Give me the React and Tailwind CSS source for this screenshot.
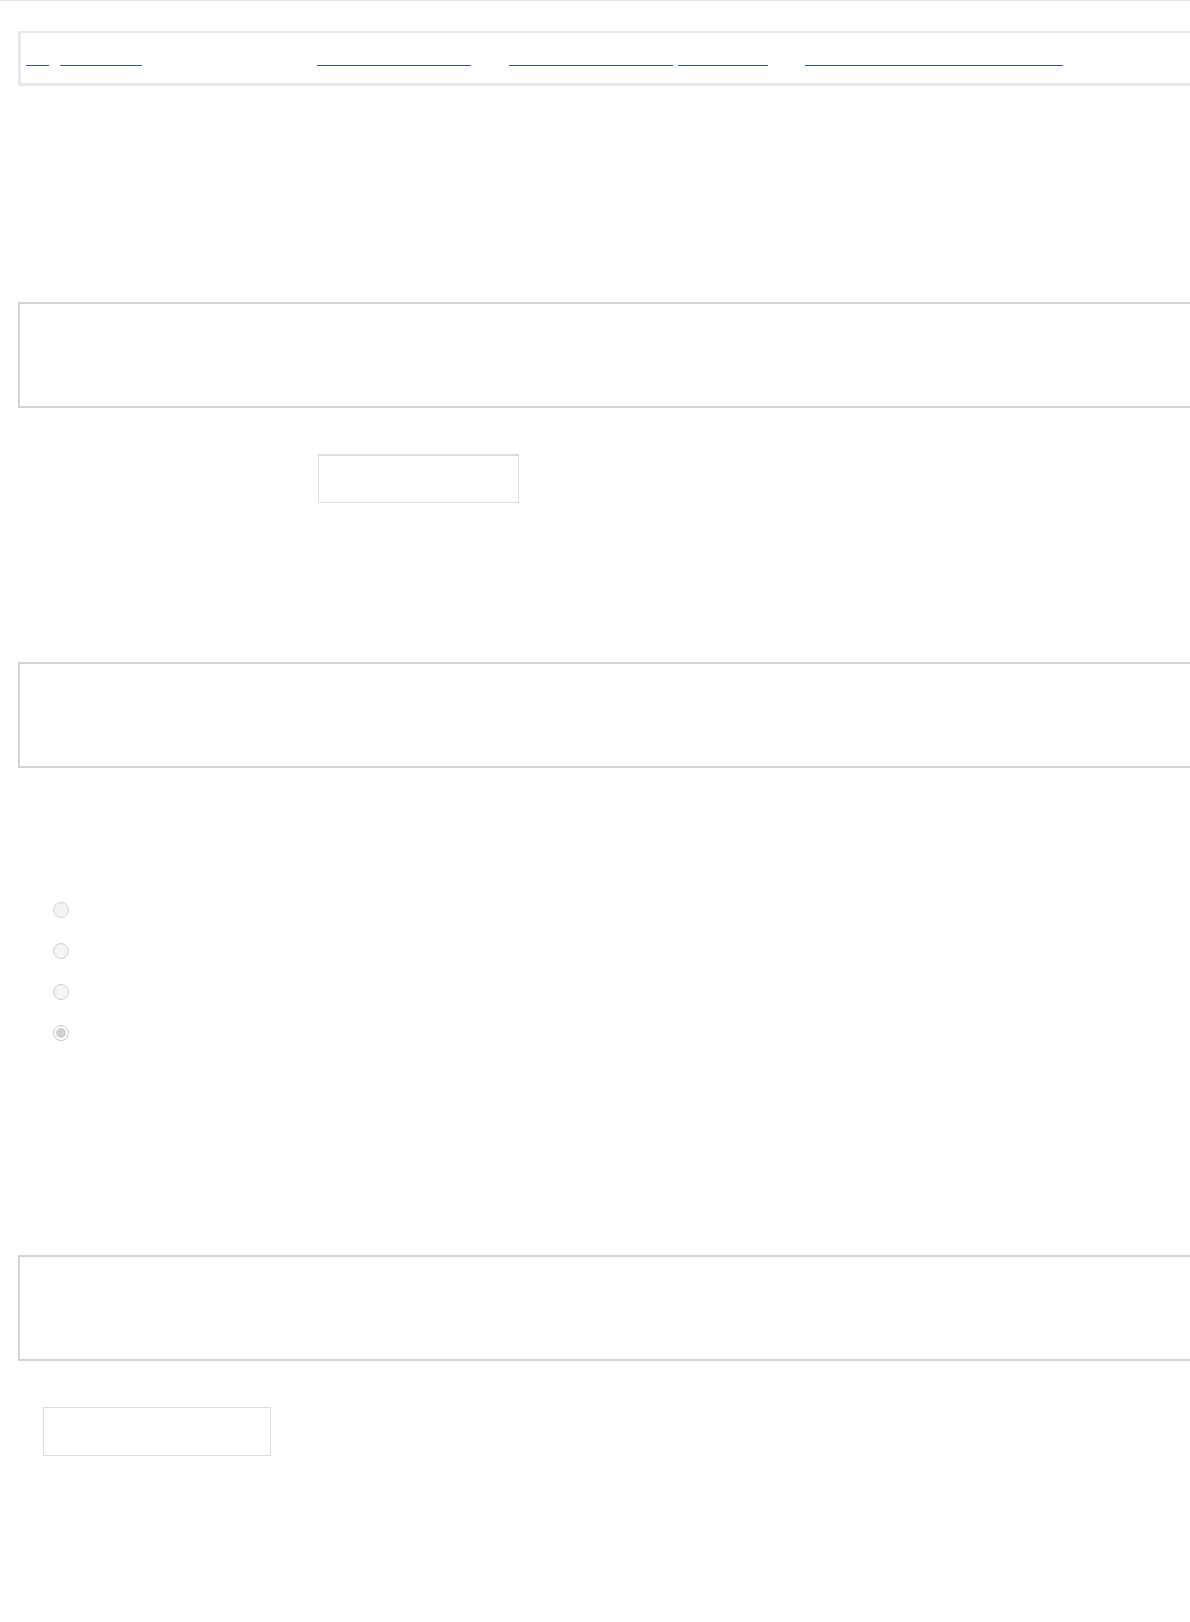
import React from "react";

function Radio({ checked }) {
  return (
    <div
      className={
        "w-[16px] h-[16px] rounded-full border flex items-center justify-center " +
        (checked ? "border-[#c6c6c6] bg-white" : "border-[#cfcfcf] bg-[#f4f4f4]")
      }
    >
      {checked && <div className="w-[10px] h-[10px] rounded-full bg-[#d0d0d0]" />}
    </div>
  );
}

function Underline({ w, ml }) {
  return <span className={"block h-px bg-[#2857a4] " + w + " " + ml} />;
}

export default function App() {
  return (
    <div className="w-full min-h-[1622px] bg-white overflow-hidden" style={{ fontFamily: '"Liberation Sans", Arial, sans-serif' }}>
      <div className="h-px bg-[#e8e4e4]" />
      <div className="pl-[18px]">
        <div className="mt-[30px] mr-[-20px] h-[55px] border-l-[3px] border-t-2 border-b-[3px] border-[#e6e9ec] bg-white">
          <div className="flex items-start pl-[5px] pt-[32px]">
            <Underline w="w-[23px]" ml="ml-0" />
            <Underline w="w-[82px]" ml="ml-[11px]" />
            <Underline w="w-[154px]" ml="ml-[175px]" />
            <Underline w="w-[164px]" ml="ml-[38px]" />
            <Underline w="w-[90px]" ml="ml-[5px]" />
            <Underline w="w-[258px]" ml="ml-[37px]" />
          </div>
        </div>

        <div className="mt-[216px] mr-[-20px] h-[106px] border-2 border-[#cfd4db]" />

        <div className="mt-[46px] ml-[300px] w-[201px] h-[49px] border border-t-2 border-[#dcdcdc] bg-white" />

        <div className="mt-[159px] mr-[-20px] h-[106px] border-2 border-[#cfd4db]" />

        <div className="mt-[134px] ml-[35px] flex flex-col gap-[25px]">
          <Radio />
          <Radio />
          <Radio />
          <Radio checked />
        </div>

        <div className="mt-[214px] mr-[-20px] h-[106px] border-2 border-[#cfd4db]" />

        <div className="mt-[46px] ml-[25px] w-[228px] h-[49px] border border-[#dcdcdc] bg-white" />
      </div>
    </div>
  );
}
